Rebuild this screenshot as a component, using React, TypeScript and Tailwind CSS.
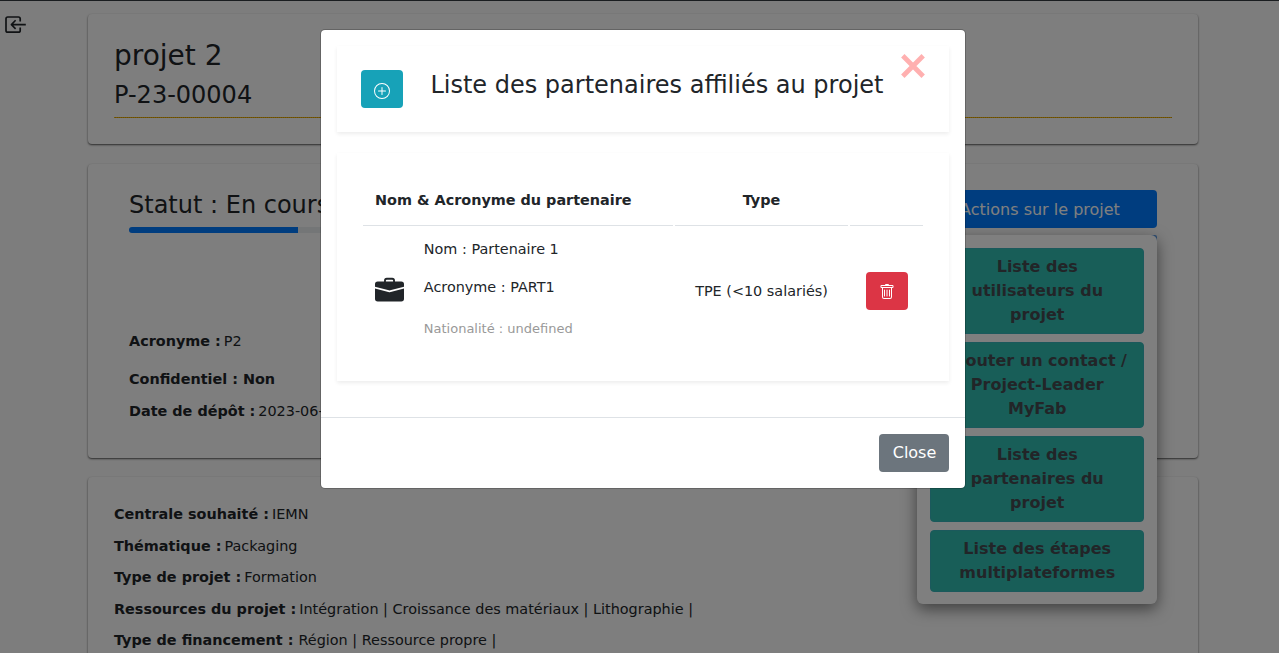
import React from "react";
import { BsPlusCircle, BsTrash, BsBriefcaseFill } from "react-icons/bs";

const card =
  "w-[1110px] rounded bg-[#fcfcfc] shadow-[0_1px_2px_rgba(0,0,0,0.65)]";

function LeaveIcon() {
  return (
    <svg viewBox="0 0 22 18" className="h-[18px] w-[22px]" fill="none" stroke="currentColor" strokeWidth="1.7" strokeLinejoin="round">
      <path d="M15.2 5.6V2.8Q15.2 1 13.4 1H2.8Q1 1 1 2.8v11.6q0 1.8 1.8 1.8h10.6q1.8 0 1.8-1.8v-2.8" />
      <path d="M20.8 8.6H6.6M10.6 4.3 6.4 8.6l4.2 4.3" strokeWidth="1.6" />
    </svg>
  );
}

function Field({ label, value, className = "", gap = "ml-[3px]" }: { label: string; value?: string; className?: string; gap?: string }) {
  return (
    <p className={"flex whitespace-nowrap text-[14.4px] leading-[22px] " + className}>
      <b>{label}</b>
      {value && <span className={gap}>{value}</span>}
    </p>
  );
}

const actions = [
  { text: "Liste des utilisateurs du projet", height: "h-[86px]" },
  { text: "Ajouter un contact / Project-Leader MyFab", height: "h-[86px]" },
  { text: "Liste des partenaires du projet", height: "h-[86px]" },
  { text: "Liste des étapes multiplateformes", height: "h-[62px]" },
];

function ActionsMenu() {
  return (
    <div className="absolute left-0 top-[46px] w-[240px]">
      <div className="absolute right-0 top-0 h-2 w-2 rounded-tr-[2px] bg-[#5f9ee8]" />
      <div className="relative rounded-md bg-white px-[13px] pb-3 pt-[13px] shadow-[0_5px_15px_rgba(0,0,0,0.5)]">
        <div className="flex flex-col gap-2">
          {actions.map((a) => (
            <button
              key={a.text}
              className={"rounded border border-[#36b2b8] bg-[#30bdb1] pl-[12.5px] pr-3 text-center text-base font-bold leading-6 text-[#444b50] " + a.height}
            >
              {a.text}
            </button>
          ))}
        </div>
      </div>
    </div>
  );
}

function Page() {
  return (
    <div className="h-full overflow-hidden border-t border-[#343a40] bg-[#fafafa]">
      <div className="flex h-full">
        <div className="w-[88px] shrink-0 pl-[5px] pt-[15px]">
          <LeaveIcon />
        </div>
        <div className="flex w-[1110px] flex-col pt-[13px]">
          <section className={card + " h-[130px] shrink-0 px-[26px] pt-[25px]"}>
            <h1 className="text-[28px] leading-[34px]">projet 2</h1>
            <h2 className="mt-[8px] text-2xl leading-[29px]">P-23-00004</h2>
            <hr className="mt-[7px] h-px border-0 bg-[repeating-linear-gradient(90deg,#eeb30e_0_1px,#cf9800_1px_2px)]" />
          </section>
          <section className={card + " mt-[20px] flex h-[294px] shrink-0 justify-between px-[41px] pt-[25px]"}>
            <div className="w-[676px] pt-[2px]">
              <h2 className="text-2xl leading-[29px]">Statut : En cours</h2>
              <div className="mt-[7px] h-[6px] overflow-hidden rounded bg-[#e9ecef]">
                <div className="h-full w-1/4 bg-[#007bff]" />
              </div>
              <Field label="Acronyme :" value="P2" className="mt-[97px]" />
              <Field label="Confidentiel : Non" className="mt-[16px]" />
              <Field label="Date de dépôt :" value="2023-06-20" className="mt-[10px]" />
            </div>
            <div className="relative w-[240px]">
              <button className="mt-px h-[38px] w-full rounded bg-[#007bff] pl-[6px] pt-px text-base text-white">
                Actions sur le projet
              </button>
              <ActionsMenu />
            </div>
          </section>
          <section className={card + " mt-[19px] flex h-[240px] shrink-0 flex-col px-[26px] pt-[26px]"}>
            <Field label="Centrale souhaité :" value="IEMN" />
            <Field label="Thématique :" value="Packaging" className="mt-[10px]" />
            <Field label="Type de projet :" value="Formation" className="mt-[9px]" />
            <Field label="Ressources du projet :" value="Intégration | Croissance des matériaux | Lithographie |" className="mt-[10px]" />
            <Field label="Type de financement :" value="Région | Ressource propre |" className="mt-[9px]" gap="ml-[5px]" />
          </section>
        </div>
      </div>
    </div>
  );
}

const panel = "bg-white shadow-[0_2px_4px_rgba(0,0,0,0.075)]";

function PartnersDialog() {
  return (
    <div role="dialog" className="mt-[29px] flex h-[460px] w-[646px] flex-col rounded-[5px] border border-black/20 bg-white bg-clip-padding">
      <div className="flex h-[388px] shrink-0 flex-col border-b border-[#dee2e6] px-4 pt-4">
        <div className={panel + " flex h-[86px] shrink-0 pl-6"}>
          <button aria-label="Ajouter" className="mt-6 flex h-[38px] w-[42px] items-center justify-center rounded bg-[#17a2b8] pt-1 text-white">
            <BsPlusCircle size={16} />
          </button>
          <h2 className="ml-[27.4px] mt-[25px] whitespace-nowrap text-2xl leading-[29px]">
            Liste des partenaires affiliés au projet
          </h2>
          <button aria-label="Fermer" className="ml-[17.6px] mt-[8px] h-6 w-6 text-[#ffb0b0]">
            <svg viewBox="0 0 24 24" className="h-6 w-6" stroke="currentColor" strokeWidth="4.8">
              <path d="M1.8 1.8 22.2 22.2M22.2 1.8 1.8 22.2" />
            </svg>
          </button>
        </div>
        <div className={panel + " mt-[21px] h-[228px] shrink-0 px-[26px] pt-[23px] text-[14.4px]"}>
          <div className="grid grid-cols-[310px_173px_73px] gap-x-[2px] text-center font-bold">
            <div className="h-[50px] border-b border-[#dee2e6] pl-3 pt-[13px] text-left leading-[22px]">Nom &amp; Acronyme du partenaire</div>
            <div className="h-[50px] border-b border-[#dee2e6] pt-[13px] leading-[22px]">Type</div>
            <div className="h-[50px] border-b border-[#dee2e6]" />
          </div>
          <div className="grid grid-cols-[310px_173px_73px] gap-x-[2px]">
            <div className="flex pl-3">
              <BsBriefcaseFill size={29} className="mt-[50px] shrink-0" />
              <div className="ml-[19.8px] pt-[12px]">
                <p className="leading-[22px]">Nom : Partenaire 1</p>
                <p className="mt-4 leading-[22px]">Acronyme : PART1</p>
                <p className="mt-[21px] text-[13px] leading-5 text-[#999]">Nationalité : undefined</p>
              </div>
            </div>
            <p className="pt-[54px] text-center leading-[22px]">TPE (&lt;10 salariés)</p>
            <div className="flex justify-center pt-[46px]">
              <button aria-label="Supprimer" className="flex h-[38px] w-[42px] items-center justify-center rounded bg-[#dc3545] pt-px text-white">
                <BsTrash size={16} />
              </button>
            </div>
          </div>
        </div>
      </div>
      <div className="flex justify-end p-4">
        <button className="h-[38px] w-[70px] shrink-0 rounded bg-[#6c757d] pl-px text-base text-white">Close</button>
      </div>
    </div>
  );
}

export default function App() {
  return (
    <div className="relative h-[653px] w-[1279px] overflow-hidden font-['DejaVu_Sans',sans-serif] text-[#212529]">
      <Page />
      <div className="absolute inset-0 bg-black/50" />
      <div className="absolute inset-0 flex items-start justify-center pl-[7px]">
        <PartnersDialog />
      </div>
    </div>
  );
}
